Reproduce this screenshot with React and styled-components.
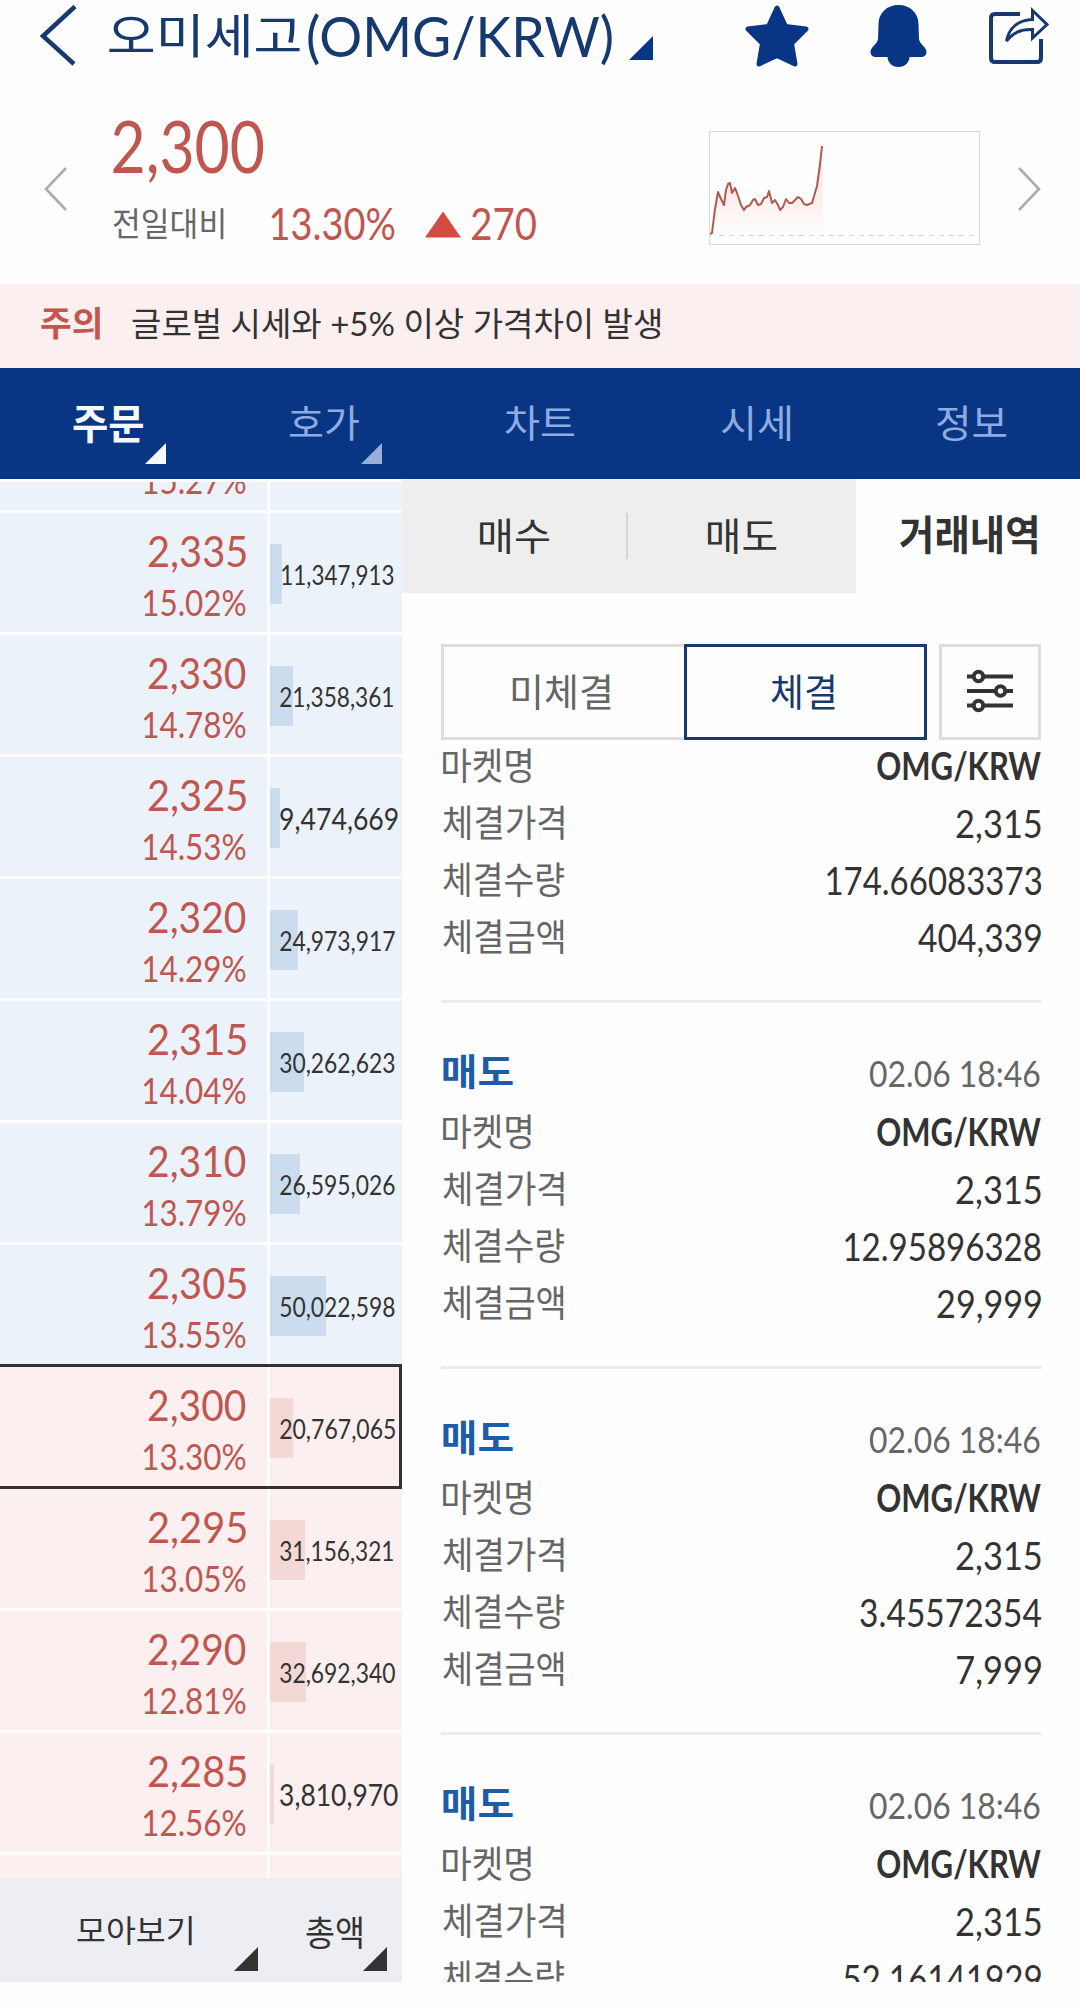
import React, { useLayoutEffect, useRef, useState } from "react";
import styled, { createGlobalStyle } from "styled-components";

const GlobalStyle = createGlobalStyle`
  * { box-sizing: border-box; }
  body {
    margin: 0;
    background: #fefefe;
    font-family: Lato, "Noto Sans CJK KR", sans-serif;
    color: #333;
  }
`;

const RED = "#bf5750";
const NAVY = "#083684";

const LabelBox = styled.span`
  display: block;
  flex: none;
  white-space: nowrap;
  font-size: ${(p) => p.$size}px;
  line-height: ${(p) => p.$size}px;
  height: ${(p) => p.$size}px;
  font-weight: ${(p) => (p.$bold ? 700 : 400)};
  color: ${(p) => p.$color || "inherit"};
  margin-top: ${(p) => p.$down || 0}px;
  margin-left: ${(p) => p.$left || 0}px;
`;

const LabelInk = styled.span`
  display: inline-block;
  transform-origin: 0 50%;
`;

// condensed label: squeezes the glyphs so that they fill exactly w pixels
const Label = ({ w, size, bold, color, down, left, children }) => {
  const ref = useRef(null);
  const [fit, setFit] = useState({ x: 0, s: 1 });

  useLayoutEffect(() => {
    const ctx = document.createElement("canvas").getContext("2d");
    const cs = getComputedStyle(ref.current);
    ctx.font = `${cs.fontWeight} ${cs.fontSize} ${cs.fontFamily}`;
    const m = ctx.measureText(children);
    const s = w / (m.actualBoundingBoxRight + m.actualBoundingBoxLeft);
    setFit({ x: m.actualBoundingBoxLeft * s, s });
  }, [w, size, children]);

  return (
    <LabelBox $size={size} $bold={bold} $color={color} $down={down} $left={left} style={{ width: w }}>
      <LabelInk ref={ref} style={{ transform: `translateX(${fit.x}px) scaleX(${fit.s})` }}>
        {children}
      </LabelInk>
    </LabelBox>
  );
};

const Screen = styled.div`
  width: 1080px;
  height: 2012px;
  overflow: hidden;
  background: #fefefe;
`;

const Header = styled.header`
  display: flex;
  align-items: center;
  height: 70px;
  padding-left: 39px;
`;

const HeaderIcons = styled.div`
  display: flex;
  align-items: center;
  margin-left: 92px;
  height: 70px;
  padding-top: 1px;
`;

const Icon = styled.svg`
  display: block;
  flex: none;
  overflow: visible;
  margin-left: ${(p) => p.$left || 0}px;
`;

const Corner = styled.i`
  display: block;
  flex: none;
  width: ${(p) => p.$size}px;
  height: ${(p) => p.$size}px;
  background: ${(p) => p.$color};
  clip-path: polygon(100% 0, 100% 100%, 0 100%);
`;

const TitleCorner = styled(Corner)`
  margin: 26px 0 0 17px;
`;

const Summary = styled.section`
  display: flex;
  align-items: center;
  height: 214px;
  padding: 22px 0 0 44px;
`;

const Quote = styled.div`
  width: 596px;
  margin-left: 47px;
`;

const QuoteLine = styled.div`
  display: flex;
  align-items: center;
  height: ${(p) => p.$h}px;
`;

const Up = styled.i`
  width: 36px;
  height: 26px;
  margin: 0 11px 0 30px;
  background: #d34b42;
  clip-path: polygon(50% 0, 100% 100%, 0 100%);
`;

const Chart = styled.svg`
  display: block;
  flex: none;
  width: 271px;
  height: 114px;
  margin-right: 38px;
  border: 1px solid #d8d8d8;
`;

const Notice = styled.div`
  display: flex;
  align-items: center;
  height: 84px;
  padding: 0 0 7px 41px;
  background: #fbf0ef;
`;

const Nav = styled.nav`
  display: flex;
  height: 111px;
  background: ${NAVY};
`;

const NavTab = styled.div`
  position: relative;
  display: flex;
  justify-content: center;
  width: 216px;
  padding-top: 35px;
`;

const NavCorner = styled(Corner)`
  position: absolute;
  right: 50px;
  top: 75px;
`;

const Body = styled.main`
  display: flex;
  height: 1503px;
`;

const Book = styled.aside`
  display: flex;
  flex-direction: column;
  width: 402px;
  padding-top: 3px;
`;

const Ladder = styled.div`
  height: 1396px;
  overflow: hidden;
`;

const LadderRows = styled.div`
  margin-top: -91px;
`;

const Level = styled.div`
  display: flex;
  gap: 3px;
  height: 119px;
  margin-bottom: 3px;
  outline: ${(p) => (p.$current ? "3px solid #333" : "none")};
  margin-left: ${(p) => (p.$current ? -4 : 0)}px;
  padding-left: ${(p) => (p.$current ? 4 : 0)}px;
  margin-right: ${(p) => (p.$current ? 3 : 0)}px;
`;

const PriceCell = styled.div`
  display: flex;
  flex-direction: column;
  align-items: flex-end;
  width: 267px;
  padding: 17px 21px 0 0;
  background: ${(p) => (p.$bid ? "#fbf0ef" : "#ebf2fa")};
`;

const AmountCell = styled.div`
  position: relative;
  display: flex;
  align-items: center;
  flex: 1;
  padding: 4px 0 0 10px;
  background: ${(p) => (p.$bid ? "#fbf0ef" : "#ebf2fa")};
`;

const Depth = styled.i`
  position: absolute;
  left: 0;
  top: 31px;
  height: 60px;
  background: ${(p) => (p.$bid ? "#f4d8d6" : "#ccdcef")};
`;

const Above = styled.div`
  position: relative;
`;

const BookFooter = styled.div`
  display: flex;
  align-items: flex-start;
  height: 104px;
  padding: 37px 0 0 77px;
  background: #edeef4;
`;

const FootCorner = styled(Corner)`
  margin: 32px 0 0 ${(p) => p.$gap}px;
`;

const Panel = styled.section`
  width: 678px;
  height: 1503px;
  overflow: hidden;
`;

const SubTabs = styled.div`
  display: flex;
  height: 114px;
`;

const SubTab = styled.div`
  display: flex;
  align-items: center;
  justify-content: center;
  width: ${(p) => p.$w}px;
  padding-bottom: 3px;
  background: ${(p) => (p.$active ? "#fefefe" : "#eee")};
`;

const SubDivider = styled.div`
  display: flex;
  align-items: center;
  background: #eee;
  &::before {
    content: "";
    width: 2px;
    height: 46px;
    background: #d6d6d6;
  }
`;

const Filters = styled.div`
  display: flex;
  padding: 51px 0 0 39px;
`;

const FilterButton = styled.div`
  display: flex;
  align-items: center;
  justify-content: center;
  width: ${(p) => p.$w}px;
  height: 96px;
  padding: 0 ${(p) => p.$shift || 0}px 2px 0;
  border: 3px solid ${(p) => (p.$active ? "#19386b" : "#ddd")};
  margin-left: ${(p) => p.$gap || 0}px;
  ${(p) => p.$joined && "border-right: 0;"}
`;

const Trades = styled.div`
  margin: -3px 39px 0;
`;

const Trade = styled.div`
  height: 366px;
`;

const Line = styled.div`
  display: flex;
  align-items: center;
  justify-content: space-between;
  height: 57px;
  padding-left: 2px;
`;

const TradeEnd = styled.div`
  height: 138px;
  padding-top: 35px;
  &::before {
    content: "";
    display: block;
    height: 3px;
    background: #ebebeb;
  }
`;

const TradeTitle = styled(Line)`
  margin-top: -62px;
  padding: 0 1px 2px 2px;
  height: 62px;
`;

const levels = [
  { price: "2,340", rate: "15.27%", amount: "" },
  { price: "2,335", rate: "15.02%", amount: "11,347,913", aw: 112, al: 2, depth: 12 },
  { price: "2,330", rate: "14.78%", amount: "21,358,361", aw: 113, depth: 23 },
  { price: "2,325", rate: "14.53%", amount: "9,474,669", aw: 118, big: true, depth: 10 },
  { price: "2,320", rate: "14.29%", amount: "24,973,917", aw: 115, depth: 28 },
  { price: "2,315", rate: "14.04%", amount: "30,262,623", aw: 115, depth: 34 },
  { price: "2,310", rate: "13.79%", amount: "26,595,026", aw: 115, depth: 30 },
  { price: "2,305", rate: "13.55%", amount: "50,022,598", aw: 115, depth: 56 },
  { price: "2,300", rate: "13.30%", amount: "20,767,065", aw: 115, depth: 23, bid: true, current: true },
  { price: "2,295", rate: "13.05%", amount: "31,156,321", aw: 113, depth: 35, bid: true },
  { price: "2,290", rate: "12.81%", amount: "32,692,340", aw: 115, depth: 36, bid: true },
  { price: "2,285", rate: "12.56%", amount: "3,810,970", aw: 118, big: true, depth: 4, bid: true },
  { price: "2,280", rate: "12.32%", amount: "", bid: true },
];

const trades = [
  { qty: "174.66083373", qw: 214, total: "404,339", tw: 123 },
  { qty: "12.95896328", qw: 196, total: "29,999", tw: 104 },
  { qty: "3.45572354", qw: 181, total: "7,999", tw: 84 },
  { qty: "52.16141929", qw: 197, total: "120,753", tw: 122 },
];

const tabs = [
  { name: "주문", active: true, corner: "#f4faff" },
  { name: "호가", corner: "#9aaedb" },
  { name: "차트" },
  { name: "시세" },
  { name: "정보" },
];

const chartLine =
  "0,102 2,101 5,77 8,60 11,67 14,73 16,58 18,52 20,51 22,61 25,56 27,61 31,73 34,78 36,75 40,73 43,68 45,67 48,73 51,72 54,66 57,65 59,59 62,71 65,68 68,73 70,78 73,75 76,67 79,71 82,71 85,68 88,65 91,67 94,72 97,73 102,71 107,54 110,32 112,14";

const OrderBook = () => (
  <Book>
    <Ladder>
      <LadderRows>
        {levels.map((l) => (
          <Level key={l.price} $current={l.current}>
            <PriceCell $bid={l.bid}>
              <Label w={98} size={42} color={RED}>{l.price}</Label>
              <Label w={103} size={36} color={RED} down={12}>{l.rate}</Label>
            </PriceCell>
            <AmountCell $bid={l.bid}>
              {l.amount && <Depth $bid={l.bid} style={{ width: l.depth }} />}
              {l.amount && (
                <Above>
                  <Label w={l.aw} size={l.big ? 30 : 27} left={l.al} down={l.big ? -2 : 0}>
                    {l.amount}
                  </Label>
                </Above>
              )}
            </AmountCell>
          </Level>
        ))}
      </LadderRows>
    </Ladder>
    <BookFooter>
      <Label w={115} size={31}>모아보기</Label>
      <FootCorner $size={24} $color="#333" $gap={42} />
      <Label w={56} size={35} left={48}>총액</Label>
      <FootCorner $size={24} $color="#333" $gap={1} />
    </BookFooter>
  </Book>
);

const App = () => (
  <>
    <GlobalStyle />
    <Screen>
      <Header>
        <Icon width="38" height="62" viewBox="0 0 38 62" fill="none" stroke="#16396f" strokeWidth="4.5">
          <path d="M36 2.500 4 32 35 60" />
        </Icon>
        <Label w={191} size={47} left={32} color="#16396f" down={1}>오미세고</Label>
        <Label w={304} size={57} left={8} color="#16396f" down={1}>(OMG/KRW)</Label>
        <TitleCorner $size={24} $color={NAVY} />
        <HeaderIcons>
          <Icon width="64" height="62" viewBox="0 0 64 62" fill={NAVY} stroke={NAVY} strokeWidth="5" strokeLinejoin="round">
            <path d="M32 3 40.500 21.500 61 24 46.500 38.500 50 59 32 50.500 14 59 17.500 38.500 3 24 23.500 21.500Z" />
          </Icon>
          <Icon $left={61} width="57" height="62" viewBox="0 0 57 62" fill={NAVY}>
            <path d="M28.500 0C17 0 8.500 8 8.500 19L8 34C7.500 39 0.500 42 0.500 47C0.500 50.500 3 52 6 52L17.500 52C17.500 57 22 62 28.500 62S39.500 57 39.500 52L51 52C54 52 56.500 50.500 56.500 47C56.500 42 49.500 39 49 34L48.500 19C48.500 8 40 0 28.500 0Z" />
          </Icon>
          <Icon $left={61} width="60" height="60" viewBox="0 0 60 60" fill="none" stroke="#16396f" strokeWidth="4">
            <path d="M32 8H7Q3 8 3 12V52Q3 56 7 56H49Q53 56 53 52V33" />
            <path strokeWidth="3" d="M44.500 4.500 59 18.500 44.500 32V23.500C32 23 25 27 18.500 35C21 22 30 14 44.500 13.500Z" />
          </Icon>
        </HeaderIcons>
      </Header>

      <Summary>
        <Icon width="22" height="44" viewBox="0 0 22 44" fill="none" stroke="#adadad" strokeWidth="2.6">
          <path d="M22 2 2 23 22 44" />
        </Icon>
        <Quote>
          <QuoteLine $h={73}>
            <Label w={151} size={71} down={-3} color={RED}>2,300</Label>
          </QuoteLine>
          <QuoteLine $h={83}>
            <Label w={111} size={33} down={-3} color="#666">전일대비</Label>
            <Label w={124} size={45} left={47} down={-3} color={RED}>13.30%</Label>
            <Up />
            <Label w={64} size={45} down={-3} color={RED}>270</Label>
          </QuoteLine>
        </Quote>
        <Chart viewBox="0 0 269 112">
          <defs>
            <linearGradient id="fade" x1="0" y1="0" x2="0" y2="1">
              <stop offset="0" stopColor="#f9cfca" />
              <stop offset="1" stopColor="#fefefe" />
            </linearGradient>
          </defs>
          <polygon points={`${chartLine} 113,102 0,102`} fill="url(#fade)" opacity="0.8" />
          <path d="M9 103.500H264" stroke="#d4d4d4" strokeWidth="1" strokeDasharray="5 5" />
          <polyline points={chartLine} fill="none" stroke="#b2584f" strokeWidth="2" strokeLinejoin="round" />
        </Chart>
        <Icon width="22" height="44" viewBox="0 0 22 44" fill="none" stroke="#adadad" strokeWidth="2.6">
          <path d="M1 2 21 23 1 44" />
        </Icon>
      </Summary>

      <Notice>
        <Label w={59} size={34} bold color="#c4564e">주의</Label>
        <Label w={528} size={33} left={32} down={1}>글로벌 시세와 +5% 이상 가격차이 발생</Label>
      </Notice>

      <Nav>
        {tabs.map((t) => (
          <NavTab key={t.name}>
            <Label w={70} size={t.active ? 41 : 38} bold={t.active} color={t.active ? "#f4faff" : "#8fabe0"}>
              {t.name}
            </Label>
            {t.corner && <NavCorner $size={21} $color={t.corner} />}
          </NavTab>
        ))}
      </Nav>

      <Body>
        <OrderBook />
        <Panel>
          <SubTabs>
            <SubTab $w={224}><Label w={69} size={38}>매수</Label></SubTab>
            <SubDivider />
            <SubTab $w={228}><Label w={69} size={38}>매도</Label></SubTab>
            <SubTab $w={224} $active><Label w={137} size={41} bold>거래내역</Label></SubTab>
          </SubTabs>
          <Filters>
            <FilterButton $w={243} $shift={5} $joined><Label w={99} size={38} color="#666">미체결</Label></FilterButton>
            <FilterButton $w={243} $shift={5} $active><Label w={64} size={38} color="#16396f">체결</Label></FilterButton>
            <FilterButton $w={102} $gap={12}>
              <Icon width="46" height="44" viewBox="0 0 46 44" fill="#fefefe" stroke="#333" strokeWidth="4">
                <path d="M0 7.500H46M0 22H46M0 36.500H46" />
                <circle cx="11.500" cy="7.500" r="4.700" />
                <circle cx="33.500" cy="22" r="4.700" />
                <circle cx="11.500" cy="36.500" r="4.700" />
              </Icon>
            </FilterButton>
          </Filters>
          <Trades>
            {trades.map((t) => (
              <Trade key={t.qty}>
                <Line>
                  <Label w={88} size={37} color="#666">마켓명</Label>
                  <Label w={164} size={39} bold>OMG/KRW</Label>
                </Line>
                <Line>
                  <Label w={121} size={37} color="#666">체결가격</Label>
                  <Label w={85} size={38}>2,315</Label>
                </Line>
                <Line>
                  <Label w={121} size={37} color="#666">체결수량</Label>
                  <Label w={t.qw} size={38}>{t.qty}</Label>
                </Line>
                <Line>
                  <Label w={121} size={37} color="#666">체결금액</Label>
                  <Label w={t.tw} size={38}>{t.total}</Label>
                </Line>
                <TradeEnd />
                <TradeTitle>
                  <Label w={70} size={37} bold color="#1d5ca6">매도</Label>
                  <Label w={170} size={36} color="#666" down={3}>02.06 18:46</Label>
                </TradeTitle>
              </Trade>
            ))}
          </Trades>
        </Panel>
      </Body>
    </Screen>
  </>
);

export default App;
